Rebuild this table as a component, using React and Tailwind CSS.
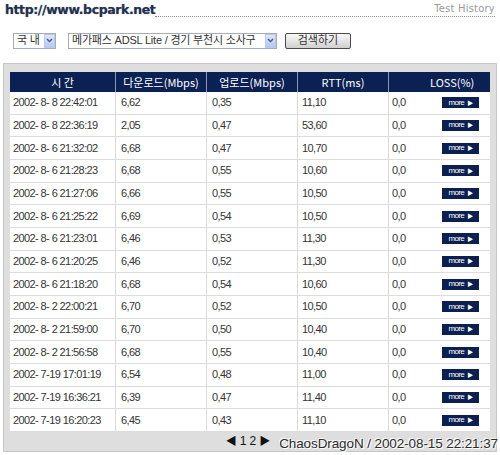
import React from 'react';

const rows = [
  ['2002- 8- 8 22:42:01', '6,62', '0,35', '11,10'],
  ['2002- 8- 8 22:36:19', '2,05', '0,47', '53,60'],
  ['2002- 8- 6 21:32:02', '6,68', '0,47', '10,70'],
  ['2002- 8- 6 21:28:23', '6,68', '0,55', '10,60'],
  ['2002- 8- 6 21:27:06', '6,66', '0,55', '10,50'],
  ['2002- 8- 6 21:25:22', '6,69', '0,54', '10,50'],
  ['2002- 8- 6 21:23:01', '6,46', '0,53', '11,30'],
  ['2002- 8- 6 21:20:25', '6,46', '0,52', '11,30'],
  ['2002- 8- 6 21:18:20', '6,68', '0,54', '10,60'],
  ['2002- 8- 2 22:00:21', '6,70', '0,52', '10,50'],
  ['2002- 8- 2 21:59:00', '6,70', '0,50', '10,40'],
  ['2002- 8- 2 21:56:58', '6,68', '0,55', '10,40'],
  ['2002- 7-19 17:01:19', '6,54', '0,48', '11,00'],
  ['2002- 7-19 16:36:21', '6,39', '0,47', '11,40'],
  ['2002- 7-19 16:20:23', '6,45', '0,43', '11,10'],
];

const Arrow = () => (
  <div className="w-[11px] h-[14px] bg-gradient-to-b from-[#dce6fb] to-[#b7c9f0] border border-[#b9c9ee] flex items-center justify-center">
    <svg width="7" height="5" viewBox="0 0 7 5">
      <path d="M1 1 L3.5 3.5 L6 1" stroke="#4d6185" strokeWidth="1.5" fill="none" />
    </svg>
  </div>
);

const Select = ({ label, width }) => (
  <div className={`${width} h-[16px] border border-[#a5acb5] bg-white flex items-center justify-between pl-[3px]`}>
    <span className="text-[11px] leading-none text-[#333] whitespace-pre tracking-[-0.2px]">{label}</span>
    <Arrow />
  </div>
);

const MoreButton = () => (
  <div className="w-[37px] h-[11px] bg-[#0b1f50] flex items-center justify-center gap-[3px] text-white text-[8px] leading-none">
    <span>more</span>
    <span className="text-[6px]">▶</span>
  </div>
);

const App = () => {
  const cell = 'h-full flex items-center border-r border-[#d9d9d9]';
  return (
    <div className="w-[500px] h-[455px] bg-white relative overflow-hidden font-['Liberation_Sans','Noto_Sans_CJK_KR',sans-serif] text-[#333]">
      {/* top title line */}
      <div className="flex items-end h-[17px] pl-[5px] pr-[5px]">
        <span className="font-['DejaVu_Sans',sans-serif] font-bold text-[12.5px] leading-[15px] tracking-[-0.4px] text-[#25304d] [text-shadow:0_0_1px_#8a93aa]">
          http://www.bcpark.net
        </span>
        <div className="flex-1 h-full border-b border-dotted border-[#8c8c8c] flex justify-end items-start pt-[4px]">
          <span className="font-['DejaVu_Sans',sans-serif] text-[10px] leading-none text-[#9a9a9a] tracking-[0.2px]">Test History</span>
        </div>
      </div>

      {/* search row */}
      <div className="flex items-center mt-[15px] pl-[13px] h-[17px]">
        <Select label="국 내" width="w-[43px]" />
        <div className="w-[12px]" />
        <Select label="메가패스 ADSL Lite / 경기 부천시 소사구" width="w-[209px]" />
        <div className="w-[8px]" />
        <div className="w-[66px] h-[16px] rounded-[2px] border border-[#4a4a4a] bg-gradient-to-b from-[#fafafa] to-[#cfcfcf] flex items-center justify-center text-[11px] leading-none text-[#333]">
          검색하기
        </div>
      </div>

      {/* panel */}
      <div className="relative mt-[14px] ml-[3px] w-[494px] h-[389px] border border-[#c6c6c6] bg-[#dedede] pt-[8px] px-[6px]">
        <div className="w-[480px] bg-white">
          <div className="grid grid-cols-[106px_91px_91px_91px_101px] h-[20px] bg-[#0c2153] text-white text-[11px] leading-none font-['Noto_Sans_CJK_KR','Liberation_Sans',sans-serif]">
            <div className="flex items-center justify-center border-r border-[#8d99b4]">시 간</div>
            <div className="flex items-center justify-center border-r border-[#8d99b4]">다운로드(Mbps)</div>
            <div className="flex items-center justify-center border-r border-[#8d99b4]">업로드(Mbps)</div>
            <div className="flex items-center justify-center border-r border-[#8d99b4]">RTT(ms)</div>
            <div className="flex items-center pl-[41px]">LOSS(%)</div>
          </div>
          {rows.map((r, i) => (
            <div
              key={i}
              className="grid grid-cols-[106px_91px_91px_91px_101px] h-[22.67px] border-b border-[#dcdcdc] text-[11px] leading-none tracking-[-0.6px] text-[#333]"
            >
              <div className={`${cell} pl-[3px] whitespace-pre`}>{r[0]}</div>
              <div className={`${cell} pl-[5px]`}>{r[1]}</div>
              <div className={`${cell} pl-[5px]`}>{r[2]}</div>
              <div className={`${cell} pl-[4px]`}>{r[3]}</div>
              <div className="h-full flex items-center justify-between pl-[3px] pr-[11px]">
                <span>0,0</span>
                <MoreButton />
              </div>
            </div>
          ))}
        </div>
        <div className="h-[19px] flex items-center justify-center text-[12px] leading-none text-[#111] gap-[3px] pr-[4px]">
          <span className="text-[11px]">◀</span>
          <span>1</span>
          <span>2</span>
          <span className="text-[11px]">▶</span>
        </div>
        <div className="absolute right-[-2px] bottom-[1px] text-[13.5px] leading-none text-[#2b2b2b] tracking-[-0.1px] [text-shadow:1px_1px_0_#fff,-1px_-1px_0_#fff] whitespace-pre">
          ChaosDragoN / 2002-08-15 22:21:37
        </div>
      </div>
    </div>
  );
};

export default App;
